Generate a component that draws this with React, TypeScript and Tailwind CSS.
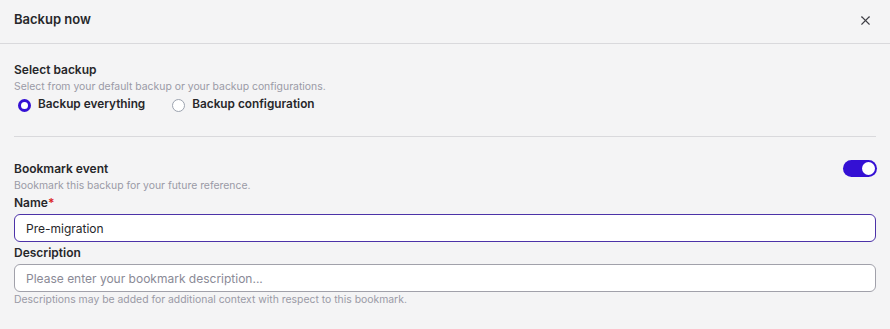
import React, { useState } from 'react';
import { X } from 'lucide-react';

function Radio({ checked, label, onClick }: { checked: boolean; label: string; onClick: () => void }) {
  return (
    <button type="button" onClick={onClick} className="flex items-center gap-[7px]">
      <span
        className={
          checked
            ? 'w-[13px] h-[13px] rounded-full border-[3.5px] border-[#3410d4] bg-white'
            : 'w-[13px] h-[13px] rounded-full border border-[#9ca3af] bg-white'
        }
      />
      <span className="text-[11.8px] font-semibold text-[#27272a]">{label}</span>
    </button>
  );
}

export default function App() {
  const [mode, setMode] = useState('everything');
  const [bookmark, setBookmark] = useState(true);
  const [name, setName] = useState('Pre-migration');
  const [desc, setDesc] = useState('');

  return (
    <div className="w-[890px] h-[329px] bg-[#f4f4f5] font-['Inter',sans-serif] text-[#27272a]">
      {/* Header */}
      <div className="h-[44px] flex items-center justify-between pl-[14px] pr-[17px] border-b border-[#d9d9dc] pb-[3px]">
        <h1 className="text-[13px] font-semibold text-[#27272a]">Backup now</h1>
        <button type="button" className="text-[#3f3f46]">
          <X className="w-[15px] h-[15px]" strokeWidth={1.8} />
        </button>
      </div>

      <div className="px-[14px] pt-[18px]">
        {/* Select backup */}
        <div className="text-[12px] font-semibold leading-[16px]">Select backup</div>
        <div className="text-[10.4px] text-[#9a9aa6] leading-[14px] mt-[2px]">
          Select from your default backup or your backup configurations.
        </div>
        <div className="flex items-center gap-[27px] pl-[4px] mt-[3px] h-[16px]">
          <Radio checked={mode === 'everything'} label="Backup everything" onClick={() => setMode('everything')} />
          <Radio checked={mode === 'config'} label="Backup configuration" onClick={() => setMode('config')} />
        </div>

        <div className="border-t border-[#d9d9dc] mt-[23px]" />

        {/* Bookmark */}
        <div className="flex items-start justify-between mt-[24px]">
          <div>
            <div className="text-[12px] font-semibold leading-[16px]">Bookmark event</div>
            <div className="text-[10.4px] text-[#9a9aa6] leading-[14px] mt-[2px]">
              Bookmark this backup for your future reference.
            </div>
          </div>
          <button
            type="button"
            onClick={() => setBookmark(!bookmark)}
            className={
              bookmark
                ? 'w-[34px] h-[17px] rounded-full bg-[#3410d4] flex items-center justify-end px-[2px] -mt-[1px] mr-[-1px]'
                : 'w-[34px] h-[17px] rounded-full bg-[#d4d4d8] flex items-center justify-start px-[2px] -mt-[1px] mr-[-1px]'
            }
          >
            <span className="w-[13px] h-[13px] rounded-full bg-white" />
          </button>
        </div>

        <div className="text-[12px] font-semibold leading-[16px] mt-[2px]">
          Name<span className="text-[#dc2626]">*</span>
        </div>
        <input
          value={name}
          onChange={(e) => setName(e.target.value)}
          className="mt-[3px] w-full h-[28px] rounded-[6px] border border-[#4c32a8] bg-white px-[11px] text-[12px] text-[#27272a] outline-none"
        />

        <div className="text-[12px] font-semibold leading-[16px] mt-[3px]">Description</div>
        <input
          value={desc}
          onChange={(e) => setDesc(e.target.value)}
          placeholder="Please enter your bookmark description..."
          className="mt-[3px] w-full h-[28px] rounded-[6px] border border-[#a1a1aa] bg-white px-[11px] text-[12px] text-[#27272a] placeholder-[#8a8a96] outline-none"
        />
        <div className="text-[10.4px] text-[#9a9aa6] leading-[14px] mt-[1px]">
          Descriptions may be added for additional context with respect to this bookmark.
        </div>
      </div>
    </div>
  );
}
